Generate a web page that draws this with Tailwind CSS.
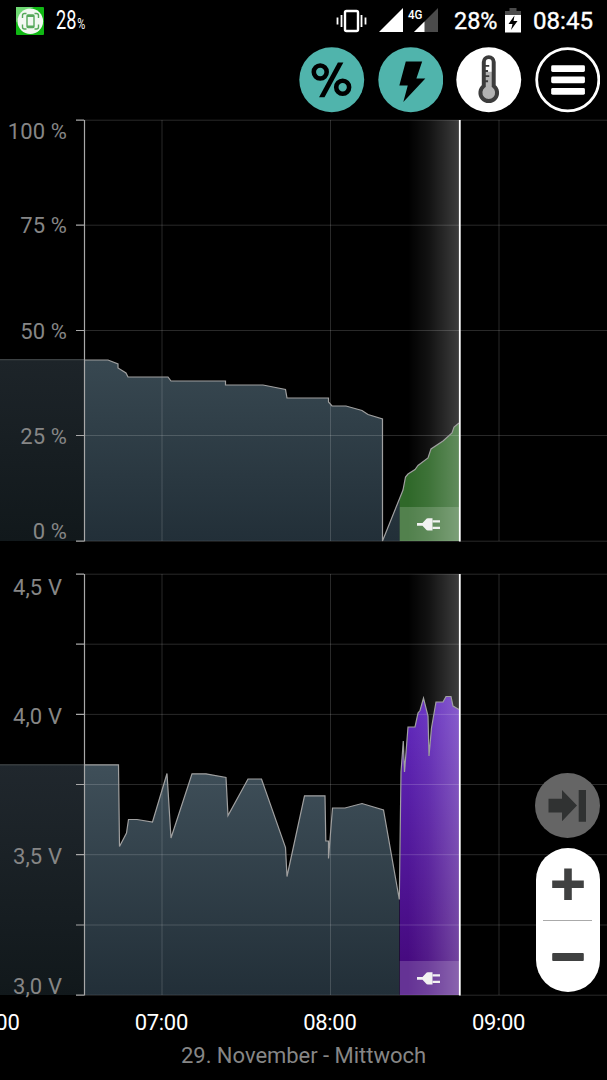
<!DOCTYPE html>
<html lang="de">
<head>
    <meta charset="UTF-8">
    <meta name="viewport" content="width=device-width, initial-scale=1.0">
    <title>Akku</title>
    <script src="https://cdn.jsdelivr.net/npm/@tailwindcss/browser@4"></script>
</head>
<body class="bg-black">
<div class="relative flex flex-col w-[607px] h-[1080px] overflow-hidden bg-black text-white font-['Roboto',sans-serif]">

    <!-- Status bar -->
    <header class="flex items-center justify-between h-[42px] pl-4 pr-3.5 shrink-0">
        <div class="flex items-center">
            <svg class="w-7 h-7" viewBox="0 0 28 28" aria-hidden="true">
                <rect width="28" height="28" rx="1" fill="#10b814"/>
                <path d="M0 0H18Q5 4 0 16Z" fill="#6fd873"/>
                <circle cx="14.3" cy="14.2" r="12.8" fill="#f2f8f2"/>
                <g fill="none" stroke="#55a85a" stroke-width="1.4">
                    <path d="M6.5 11V8.5q0-2 2-2h2M18.500 6.500h2q2 0 2 2V11M22.500 17.500V20q0 2-2 2h-2M10.500 22h-2q-2 0-2-2v-2.500"/>
                    <rect x="11" y="8" width="7" height="12.500" rx="1"/>
                    <path d="M11 9h7M11 19.500h7" stroke-width="2"/>
                </g>
            </svg>
            <svg class="w-8 h-7 ml-3 overflow-visible" viewBox="0 0 32 28" fill="#fff">
                <text x="0" y="22.300" font-size="25.500" textLength="20.500" lengthAdjust="spacingAndGlyphs">28</text>
                <text x="21.300" y="22.300" font-size="14.500" textLength="8" lengthAdjust="spacingAndGlyphs">%</text>
            </svg>
        </div>
        <div class="flex items-center">
            <svg class="w-[31px] h-7" viewBox="0 0 31 28" aria-hidden="true">
                <rect x="9" y="4" width="13" height="20" rx="1.500" fill="none" stroke="#fff" stroke-width="2.400"/>
                <path d="M1.500 10.500v7M5.500 8v12M25.500 8v12M29.500 10.500v7" stroke="#fff" stroke-width="1.800"/>
            </svg>
            <svg class="w-[60px] h-7 ml-3" viewBox="0 0 60 28" aria-hidden="true">
                <path d="M0 25 24 1V25Z" fill="#fff"/>
                <path d="M35 25 59 1V25Z" fill="#4b4b4b"/>
                <path d="M35 25 45.500 14.500V25Z" fill="#fff"/>
                <text x="29" y="11.500" fill="#fff" font-size="13.500" font-weight="500" textLength="14.500" lengthAdjust="spacingAndGlyphs">4G</text>
            </svg>
            <svg class="w-[44px] h-7 ml-[15px]" viewBox="0 0 44 28">
                <text x="0" y="22" fill="#fff" stroke="#fff" stroke-width=".35" font-size="23.500" textLength="43.500" lengthAdjust="spacingAndGlyphs">28%</text>
            </svg>
            <svg class="w-4 h-7 ml-[7px]" viewBox="0 0 16 28" aria-hidden="true">
                <path d="M4.500 1h7v3H16v4H0V4h4.500Z" fill="#4b4b4b"/>
                <path d="M0 8h16v17.500H0Z" fill="#fff"/>
                <path d="M9.500 8.500 3.500 17h4l-1.500 6L12.500 14H8.500Z" fill="#000"/>
            </svg>
            <svg class="w-[60px] h-7 ml-3" viewBox="0 0 60 28">
                <text x="0" y="22" fill="#fff" stroke="#fff" stroke-width=".35" font-size="23.500" textLength="60" lengthAdjust="spacingAndGlyphs">08:45</text>
            </svg>
        </div>
    </header>

    <!-- Chart toggles -->
    <nav class="flex justify-end gap-[13px] h-[77px] pt-[5px] pr-[6.700px] shrink-0">
        <button aria-label="Prozent" class="w-[65.500px] h-[65.500px]">
            <svg class="w-full h-full" viewBox="0 0 66 66">
                <circle cx="33" cy="33" r="32.700" fill="#50b4ac"/>
                <g fill="none" stroke="#000" stroke-width="4.600">
                    <circle cx="21.400" cy="25.200" r="6.500"/>
                    <circle cx="44" cy="40.600" r="6.500"/>
                </g>
                <path d="M39.200 15.500h5.500L25.700 50.700h-5.500Z" fill="#000"/>
            </svg>
        </button>
        <button aria-label="Spannung" class="w-[65.500px] h-[65.500px]">
            <svg class="w-full h-full" viewBox="0 0 66 66">
                <circle cx="33" cy="33" r="32.700" fill="#50b4ac"/>
                <path d="M28 14.700h16.500L38.700 31.700H47.700L25.500 55.500 30 38.800H21.500Z" fill="#000"/>
            </svg>
        </button>
        <button aria-label="Temperatur" class="w-[65.500px] h-[65.500px]">
            <svg class="w-full h-full" viewBox="0 0 66 66">
                <circle cx="33" cy="33" r="32.700" fill="#fff"/>
                <path d="M28 15.200a5 5 0 0 1 10 0V39.300a8.400 8.400 0 1 1-10 0Z" fill="#fff"/>
                <path d="M28 25h10V39.300a8.400 8.400 0 1 1-10 0Z" fill="#b2b2b2"/>
                <path d="M28 15.200a5 5 0 0 1 10 0V39.300a8.400 8.400 0 1 1-10 0Z" fill="none" stroke="#3c3c3c" stroke-width="4"/>
                <path d="M29 19h4.500M29 24.200h3.300M29 29.300h4.500M29 34.500h3.300" stroke="#3c3c3c" stroke-width="1.900"/>
            </svg>
        </button>
        <button aria-label="Menü" class="w-[65.500px] h-[65.500px]">
            <svg class="w-full h-full" viewBox="0 0 66 66">
                <circle cx="33" cy="33" r="31.300" fill="#000" stroke="#fff" stroke-width="2.800"/>
                <g fill="#fff">
                    <rect x="16.300" y="18.500" width="34" height="6.800" rx="1.500"/>
                    <rect x="16.300" y="29.800" width="34" height="6.800" rx="1.500"/>
                    <rect x="16.300" y="41.200" width="34" height="6.800" rx="1.500"/>
                </g>
            </svg>
        </button>
    </nav>

    <!-- Battery level -->
    <svg class="block w-[607px] h-[424px] shrink-0" viewBox="0 119 607 424">
        <defs>
            <linearGradient id="level" gradientUnits="userSpaceOnUse" x1="0" y1="360" x2="0" y2="541">
                <stop offset="0" stop-color="#384851"/>
                <stop offset="1" stop-color="#222f38"/>
            </linearGradient>
            <linearGradient id="past" gradientUnits="userSpaceOnUse" x1="0" y1="360" x2="0" y2="541">
                <stop offset="0" stop-color="#1d2429"/>
                <stop offset="1" stop-color="#11181b"/>
            </linearGradient>
            <linearGradient id="now" gradientUnits="userSpaceOnUse" x1="408" y1="0" x2="459" y2="0">
                <stop offset="0" stop-color="#fff" stop-opacity="0"/>
                <stop offset=".4" stop-color="#fff" stop-opacity=".07"/>
                <stop offset="1" stop-color="#fff" stop-opacity=".24"/>
            </linearGradient>
            <g id="plug" fill="#f2f2f2">
                <path d="M0 5.300h5.500L9 1.500Q9.500 .5 11 .5H15.500V12.800H11Q9.500 12.800 9 11.800L5.500 8H0Z"/>
                <path d="M15.500 2.400H23V4.600H15.500ZM15.500 8.900H23V11.100H15.500Z"/>
            </g>
        </defs>
        <path d="M0 360H84V541H0Z" fill="url(#past)"/>
        <path d="M0 359.700H84" stroke="#4a5053"/>
        <path d="M84 541V360H108L118 364V368L126 373 128 377H168L171 381H225.500V385H263L285.500 389.500 287 398H328.500V402L332 406H346L362 410.500 368 414.500 382.500 419V541L400 497V541Z" fill="url(#level)"/>
        <path d="M399.700 541V499L403 490 405.500 477 408 474 415 469.500 418 465.500 428 458 431 449 443 441 452 433 454 427 459 423V541Z" fill="#2f6829"/>
        <path d="M399.700 507H459V541H399.700Z" fill="#fff" fill-opacity=".17"/>
        <path d="M408 120H459V541H408Z" fill="url(#now)"/>
        <path d="M84 120.200H607M84 225.200H607M84 330.500H607M84 435.500H607M84 541.200H607M162 120V541M330.500 120V541M499 120V541" stroke="#fff" stroke-opacity=".16"/>
        <path d="M84 360H108L118 364V368L126 373 128 377H168L171 381H225.500V385H263L285.500 389.500 287 398H328.500V402L332 406H346L362 410.500 368 414.500 382.500 419V541L403 490 405.500 477 408 474 415 469.500 418 465.500 428 458 431 449 443 441 452 433 454 427 459 423" fill="none" stroke="#a0a0a0" stroke-width="1.200"/>
        <path d="M84.500 120V541.500M76 120.200h8M76 225.200h8M76 330.500h8M76 435.500h8M76 541.200h8" stroke="#a8a8a8" stroke-width="1.200"/>
        <path d="M459.800 120V541.500" stroke="#fff" stroke-width="1.800"/>
        <use href="#plug" x="417" y="517.800"/>
        <g fill="#868686" font-size="22" text-anchor="end" letter-spacing=".1">
            <text x="67" y="138.500">100 %</text>
            <text x="67" y="233">75 %</text>
            <text x="67" y="338.500">50 %</text>
            <text x="67" y="444">25 %</text>
            <text x="67" y="539">0 %</text>
        </g>
    </svg>

    <!-- Voltage -->
    <svg class="block w-[607px] h-[424px] mt-[30px] shrink-0 overflow-visible" viewBox="0 573 607 424">
        <defs>
            <linearGradient id="volt" gradientUnits="userSpaceOnUse" x1="0" y1="765" x2="0" y2="995">
                <stop offset="0" stop-color="#3f4f59"/>
                <stop offset="1" stop-color="#222f38"/>
            </linearGradient>
            <linearGradient id="volt-past" gradientUnits="userSpaceOnUse" x1="0" y1="765" x2="0" y2="995">
                <stop offset="0" stop-color="#20272d"/>
                <stop offset="1" stop-color="#11181b"/>
            </linearGradient>
            <linearGradient id="charge" gradientUnits="userSpaceOnUse" x1="0" y1="697" x2="0" y2="960">
                <stop offset="0" stop-color="#622abf"/>
                <stop offset="1" stop-color="#460a80"/>
            </linearGradient>
        </defs>
        <path d="M0 765H84V995H0Z" fill="url(#volt-past)"/>
        <path d="M0 764.800H84" stroke="#4a5053"/>
        <path d="M84 995V764.800H118.500L119.500 846.500 126.500 833 128.500 819.500H137L152.500 822 167 773.500 171 838 192 773.800H206L226 777.500 228 815.500 248 779H261.500L285.500 847.500 287 876.500 304.500 795.800H325L325.800 841H328.500V858.500L332.500 808H345L362 803.500 383.500 810 399.300 899.500V995Z" fill="url(#volt)"/>
        <path d="M399.700 995V899L401 772 403.300 741 404.500 772 408 727H415L418 713 420 710.500 423.500 698 428 716 429 756 431.500 728 436 702H443L446 696.500H451L453 706 459 709.500V995Z" fill="url(#charge)"/>
        <path d="M399.700 961H459V995H399.700Z" fill="#fff" fill-opacity=".17"/>
        <path d="M408 574H459V995H408Z" fill="url(#now)"/>
        <path d="M84 574.200H607M84 644.200H607M84 714.400H607M84 784.500H607M84 854.700H607M84 925H607M84 995.200H607M162 574V995M330.500 574V995M499 574V995" stroke="#fff" stroke-opacity=".16"/>
        <path d="M84 764.800H118.500L119.500 846.500 126.500 833 128.500 819.500H137L152.500 822 167 773.500 171 838 192 773.800H206L226 777.500 228 815.500 248 779H261.500L285.500 847.500 287 876.500 304.500 795.800H325L325.800 841H328.500V858.500L332.500 808H345L362 803.500 383.500 810 399.300 899.500 401 772 403.300 741 404.500 772 408 727H415L418 713 420 710.500 423.500 698 428 716 429 756 431.500 728 436 702H443L446 696.500H451L453 706 459 709.500" fill="none" stroke="#a0a0a0" stroke-width="1.200"/>
        <path d="M84.500 574V995.500M76 574.200h8M76 644.200h8M76 714.400h8M76 784.500h8M76 854.700h8M76 925h8M76 995.200h8" stroke="#a8a8a8" stroke-width="1.200"/>
        <path d="M459.800 574V995.500" stroke="#fff" stroke-width="1.800"/>
        <use href="#plug" x="417" y="971.800"/>
        <g fill="#868686" font-size="22" text-anchor="end" letter-spacing=".1">
            <text x="62" y="594.500">4,5 V</text>
            <text x="62" y="724">4,0 V</text>
            <text x="62" y="864">3,5 V</text>
            <text x="62" y="993.500">3,0 V</text>
        </g>
    </svg>

    <!-- Time axis -->
    <svg class="block w-[607px] h-[83px] shrink-0" viewBox="0 997 607 83" text-anchor="middle">
        <g fill="#fff" font-size="22">
            <text x="-7" y="1029.500" textLength="53.500">06:00</text>
            <text x="161.500" y="1029.500" textLength="53.500">07:00</text>
            <text x="330" y="1029.500" textLength="53.500">08:00</text>
            <text x="498.700" y="1029.500" textLength="53.500">09:00</text>
        </g>
        <text x="303.500" y="1063" fill="#868686" font-size="22" textLength="245">29. November - Mittwoch</text>
    </svg>

    <!-- Floating controls -->
    <div class="absolute right-[7px] top-[773px] flex flex-col items-center gap-2.5">
        <button aria-label="Zum Ende" class="w-[65px] h-[65px]">
            <svg class="w-full h-full" viewBox="0 0 65 65">
                <circle cx="32.500" cy="32.500" r="32.500" fill="#656565"/>
                <path d="M13.500 25.700H27V17L42 32.500 27 48.200V39.500H13.500ZM43.700 17H51V48.700H43.700Z" fill="#303232"/>
            </svg>
        </button>
        <div class="flex flex-col items-center w-16 h-36 rounded-full bg-white">
            <button aria-label="Vergrößern" class="flex items-center justify-center w-full h-[72px]">
                <svg class="w-8 h-8" viewBox="0 0 32 32"><path d="M12.200 .5h7.600V12.500H31.800V20H19.800V32H12.200V20H.2V12.500H12.200Z" fill="#404141"/></svg>
            </button>
            <div class="w-[49px] h-px bg-[#aaa]"></div>
            <button aria-label="Verkleinern" class="flex items-center justify-center w-full h-[71px]">
                <svg class="w-8 h-2" viewBox="0 0 32 8"><rect x=".2" width="31.600" height="8" rx="1" fill="#404141"/></svg>
            </button>
        </div>
    </div>
</div>
</body>
</html>
